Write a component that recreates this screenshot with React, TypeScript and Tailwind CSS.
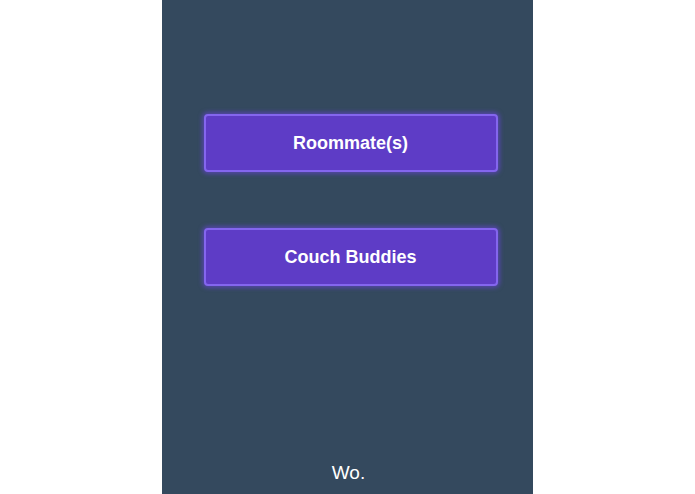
export default function App() {
  return (
    <div className="flex h-[494px] w-full justify-center bg-white" style={{ fontFamily: '"Liberation Sans", Arial, sans-serif' }}>
      <div className="ml-[-1px] flex h-full w-[371px] flex-col bg-[#34495e]">
        <div className="ml-[42px] mt-[114px] flex w-[294px] flex-col gap-[56px]">
          <button className="h-[58px] rounded-[4px] border-2 border-[#8466ee] bg-[#5e3cc6] text-[18px] font-bold text-white shadow-[0_0_4px_2px_rgba(110,70,230,0.55)]">
            Roommate(s)
          </button>
          <button className="h-[58px] rounded-[4px] border-2 border-[#8466ee] bg-[#5e3cc6] text-[18px] font-bold text-white shadow-[0_0_4px_2px_rgba(110,70,230,0.55)]">
            Couch Buddies
          </button>
        </div>
        <div className="mt-auto pb-[7px] pl-[3px] text-center text-[19px] text-white">Wo.</div>
      </div>
    </div>
  );
}
